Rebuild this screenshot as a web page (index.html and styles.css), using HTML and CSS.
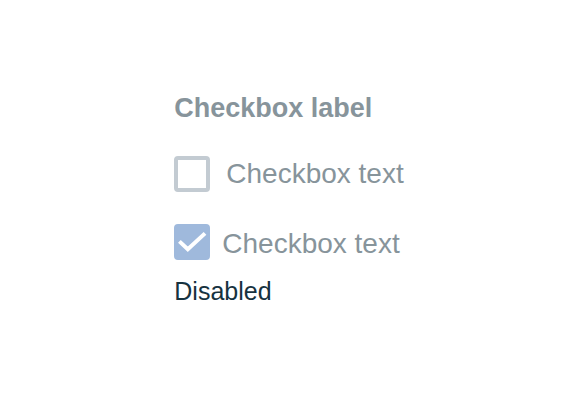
FILE: index.html
```
<!DOCTYPE html>
<html lang="en">
<head>
<meta charset="utf-8">
<title>Checkbox – Disabled</title>
<link rel="stylesheet" href="styles.css">
</head>
<body>
<main class="page">
  <div class="example">
    <fieldset class="group" disabled>
      <legend class="group-label">Checkbox label</legend>
      <div class="option">
        <span class="control"><input class="box" type="checkbox" id="option-1"></span>
        <label class="text" for="option-1">Checkbox text</label>
      </div>
      <div class="option option-checked">
        <span class="control">
          <input class="box" type="checkbox" id="option-2" checked>
          <svg class="tick" viewBox="0 0 36 36" aria-hidden="true"><path d="M5.4 17.4 L13.8 25.2 L31 9.4"/></svg>
        </span>
        <label class="text" for="option-2">Checkbox text</label>
      </div>
    </fieldset>
    <p class="caption">Disabled</p>
  </div>
</main>
</body>
</html>
```

FILE: styles.css
```
body {
  margin: 0;
  background: #fff;
  font-family: "Liberation Sans", Arial, sans-serif;
}

.page {
  display: flex;
  justify-content: center;
  padding: 92px 16px 0;
}

.example {
  padding-right: 2px;
}

.group {
  min-width: 0;
  margin: 0;
  padding: 0;
  border: 0;
}

.group-label {
  padding: 0;
  margin-bottom: 32px;
  color: #87949b;
  font-size: 27px;
  font-weight: 700;
  line-height: 32px;
}

.option {
  display: flex;
  align-items: flex-start;
  gap: 16px;
}

.option-checked {
  gap: 12px;
  margin-top: 32px;
}

.control {
  position: relative;
  width: 36px;
  height: 36px;
}

.box {
  appearance: none;
  box-sizing: border-box;
  display: block;
  width: 36px;
  height: 36px;
  margin: 0;
  border: 4px solid #c3cbd2;
  border-radius: 4px;
  background: #fff;
}

.box:checked {
  border-color: #9fb9dc;
  background: #9fb9dc;
}

.tick {
  position: absolute;
  inset: 0;
  fill: none;
  stroke: #fff;
  stroke-width: 4;
}

.text {
  color: #87949b;
  font-size: 28px;
  line-height: 36px;
}

.option-checked .text {
  line-height: 40px;
}

.caption {
  margin: 12px 0 0;
  color: #16323f;
  font-size: 25px;
  line-height: 30px;
}
```
